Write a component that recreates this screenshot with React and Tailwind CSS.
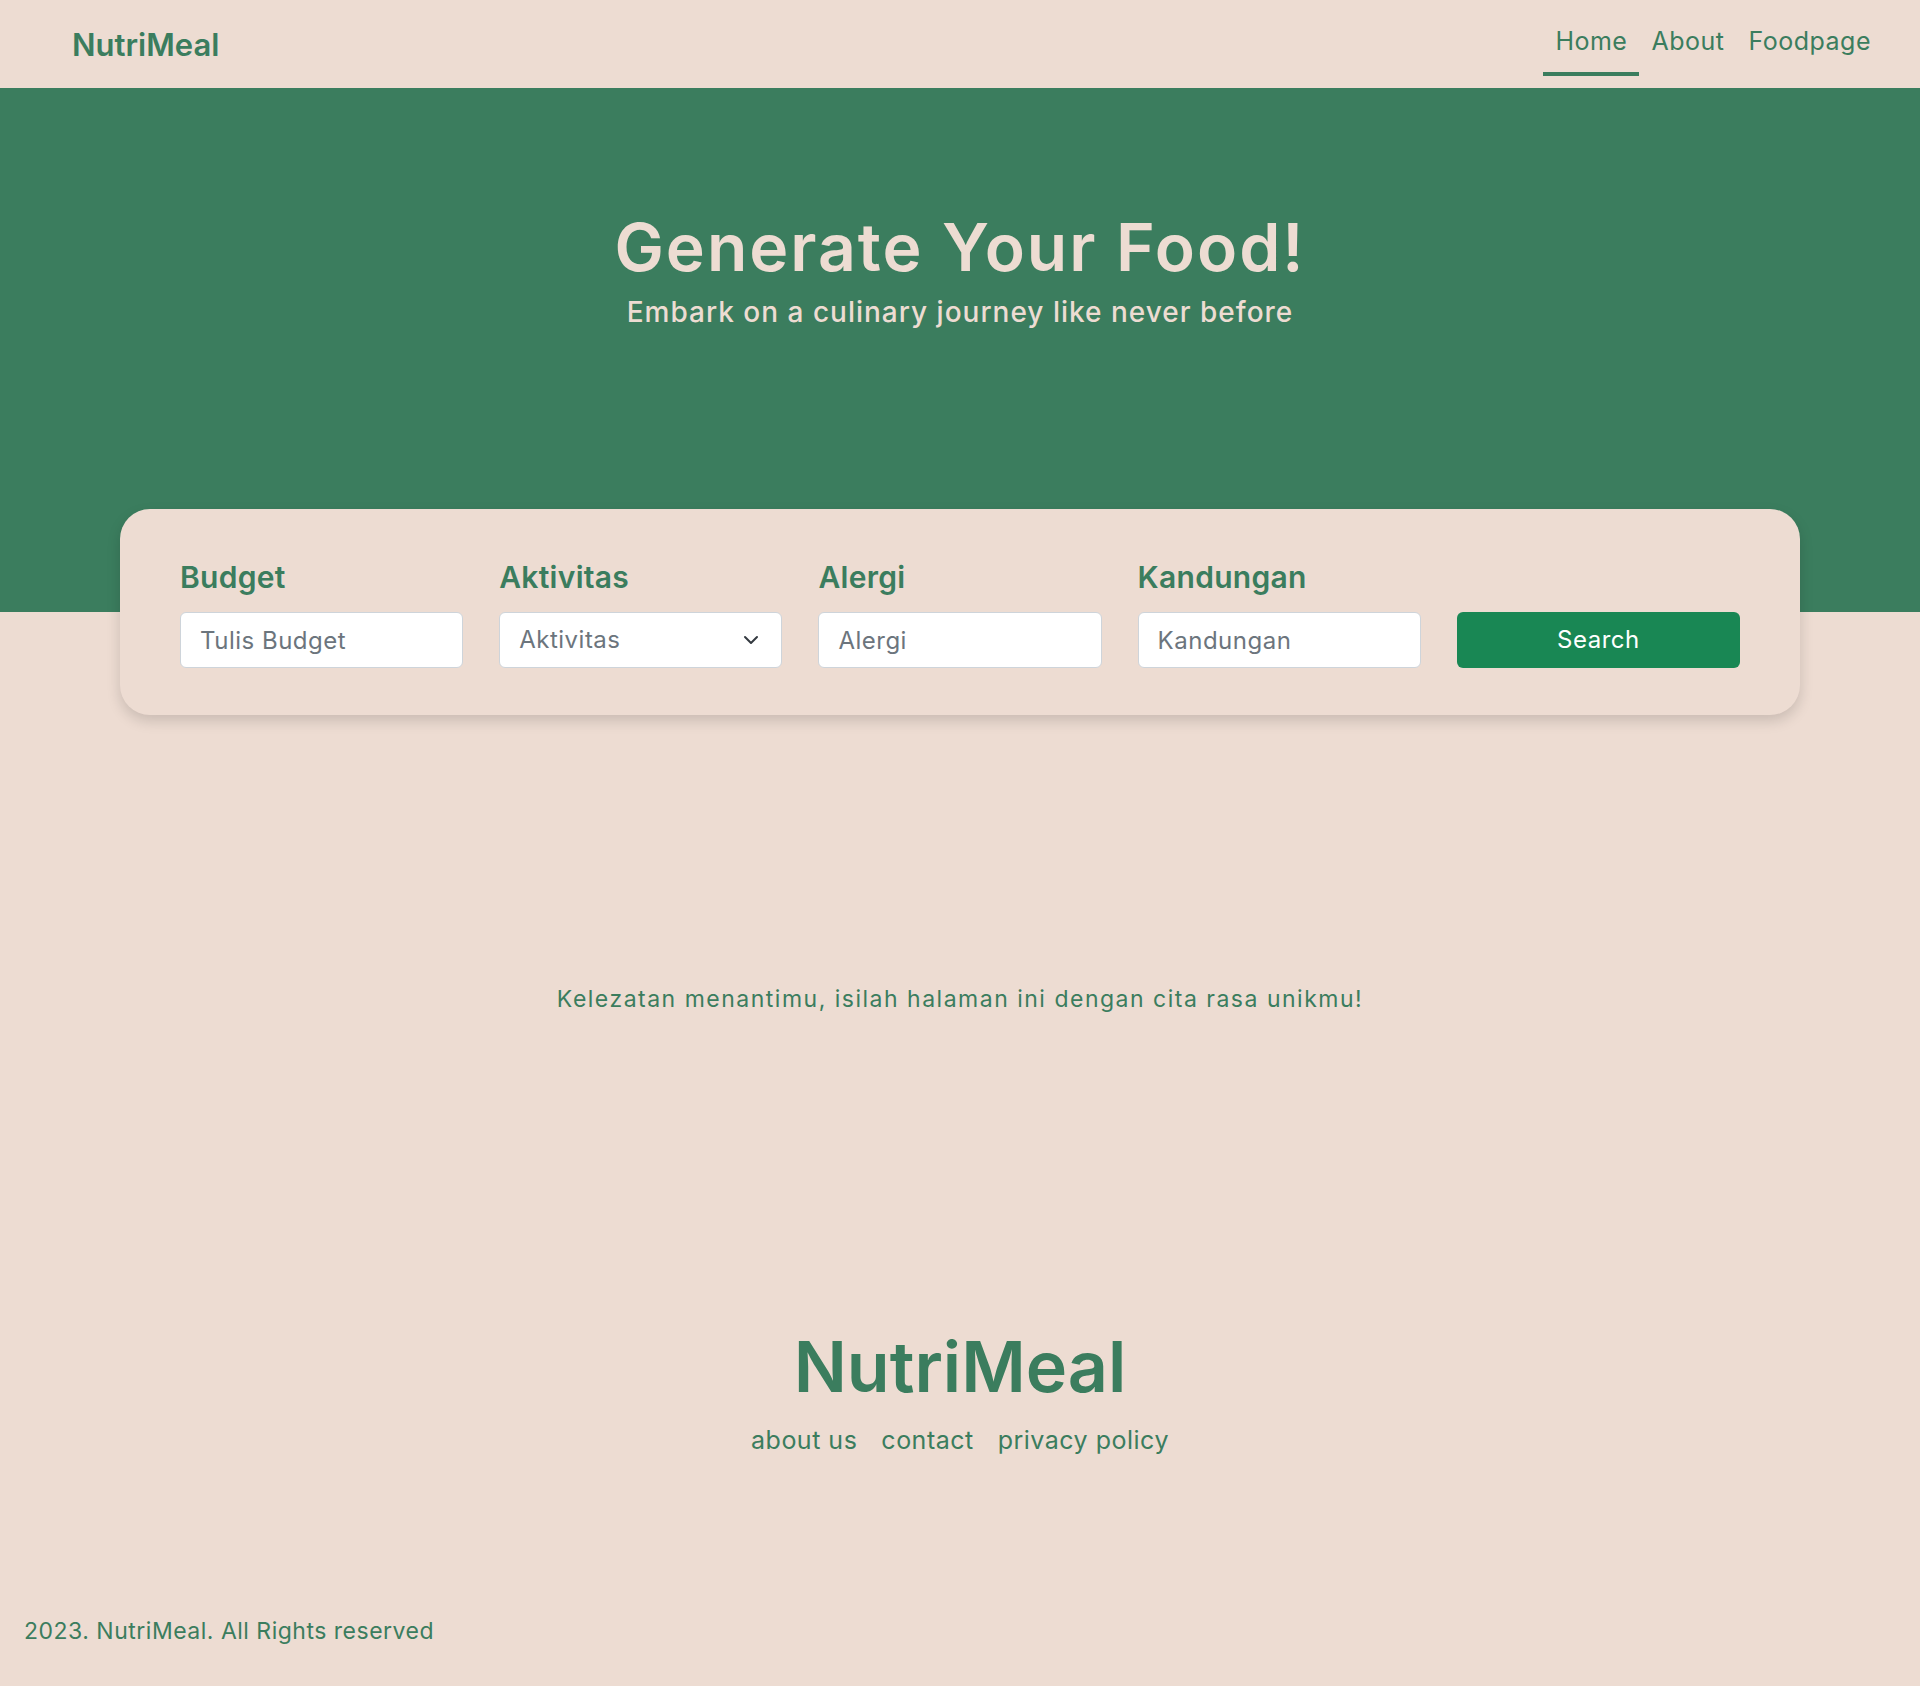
import React from "react";

function Field({ label, children }) {
  return (
    <div className="flex flex-col">
      <label className="text-[30px] font-semibold leading-[36px] tracking-[0.3px] text-[#3b7d5e] mb-[17px]">{label}</label>
      {children}
    </div>
  );
}

const inputCls =
  "h-[56px] bg-white border border-[#ced4da] rounded-[6px] px-[19px] text-[24px] tracking-[0.5px] text-[#495057] placeholder:text-[#6c757d] outline-none";

export default function App() {
  return (
    <div className="min-h-[1686px] bg-[#eddcd2] flex flex-col font-['Inter',sans-serif]">
      {/* header */}
      <header className="h-[88px] flex justify-between pl-[72px] pr-[37px]">
        <div className="self-center text-[31px] font-semibold text-[#3b7d5e] leading-none">NutriMeal</div>
        <nav className="flex items-start">
          <a className="block px-3 pt-[23px] pb-[13px] leading-[36px] text-[25px] tracking-[0.5px] text-[#3b7d5e] border-b-4 border-[#3b7d5e]">Home</a>
          <a className="block px-3 pt-[23px] pb-[13px] leading-[36px] text-[25px] tracking-[0.5px] text-[#3b7d5e] border-b-4 border-transparent">About</a>
          <a className="block px-3 pt-[23px] pb-[13px] leading-[36px] text-[25px] tracking-[0.5px] text-[#3b7d5e] border-b-4 border-transparent">Foodpage</a>
        </nav>
      </header>

      {/* hero */}
      <section className="h-[524px] bg-[#3b7d5e] flex flex-col items-center pt-[116px]">
        <h1 className="text-[66px] font-semibold leading-[86px] text-[#eddcd2] tracking-[2px]">Generate Your Food!</h1>
        <p className="mt-[4px] text-[28px] font-medium leading-[36px] tracking-[1px] text-[#eddcd2]">Embark on a culinary journey like never before</p>
      </section>

      {/* search card */}
      <div className="-mt-[103px] px-[120px] relative">
        <div className="bg-[#eddcd2] rounded-[30px] shadow-[0_6px_14px_rgba(0,0,0,0.15)] px-[60px] pt-[50px] pb-[47px] grid grid-cols-5 gap-x-[36px]">
          <Field label="Budget">
            <input placeholder="Tulis Budget" className={inputCls} />
          </Field>
          <Field label="Aktivitas">
            <div className="h-[56px] bg-white border border-[#ced4da] rounded-[6px] pl-[19px] pr-[22px] flex items-center justify-between">
              <span className="text-[24px] tracking-[0.5px] text-[#6c757d]">Aktivitas</span>
              <svg width="16" height="16" viewBox="0 0 16 16" fill="none" stroke="#343a40" strokeWidth="2" strokeLinecap="round" strokeLinejoin="round">
                <path d="M2 5l6 6 6-6" />
              </svg>
            </div>
          </Field>
          <Field label="Alergi">
            <input placeholder="Alergi" className={inputCls} />
          </Field>
          <Field label="Kandungan">
            <input placeholder="Kandungan" className={inputCls} />
          </Field>
          <div className="flex flex-col justify-end">
            <button className="h-[56px] bg-[#198754] rounded-[6px] text-white text-[24px] tracking-[0.5px]">Search</button>
          </div>
        </div>
      </div>

      {/* empty message */}
      <p className="mt-[268px] text-center text-[23px] leading-[33px] tracking-[1.5px] text-[#3b7d5e]">
        Kelezatan menantimu, isilah halaman ini dengan cita rasa unikmu!
      </p>

      {/* footer */}
      <footer className="mt-[308px] flex flex-col items-center">
        <div className="text-[70px] font-semibold leading-[86px] text-[#3b7d5e]">NutriMeal</div>
        <div className="mt-[12px] flex gap-[24px] text-[25px] leading-[36px] tracking-[0.5px] text-[#3b7d5e]">
          <a>about us</a>
          <a>contact</a>
          <a>privacy policy</a>
        </div>
      </footer>

      <div className="mt-[157px] pl-[24px] text-[23px] leading-[33px] tracking-[0.5px] text-[#3b7d5e]">
        2023. NutriMeal. All Rights reserved
      </div>
    </div>
  );
}
